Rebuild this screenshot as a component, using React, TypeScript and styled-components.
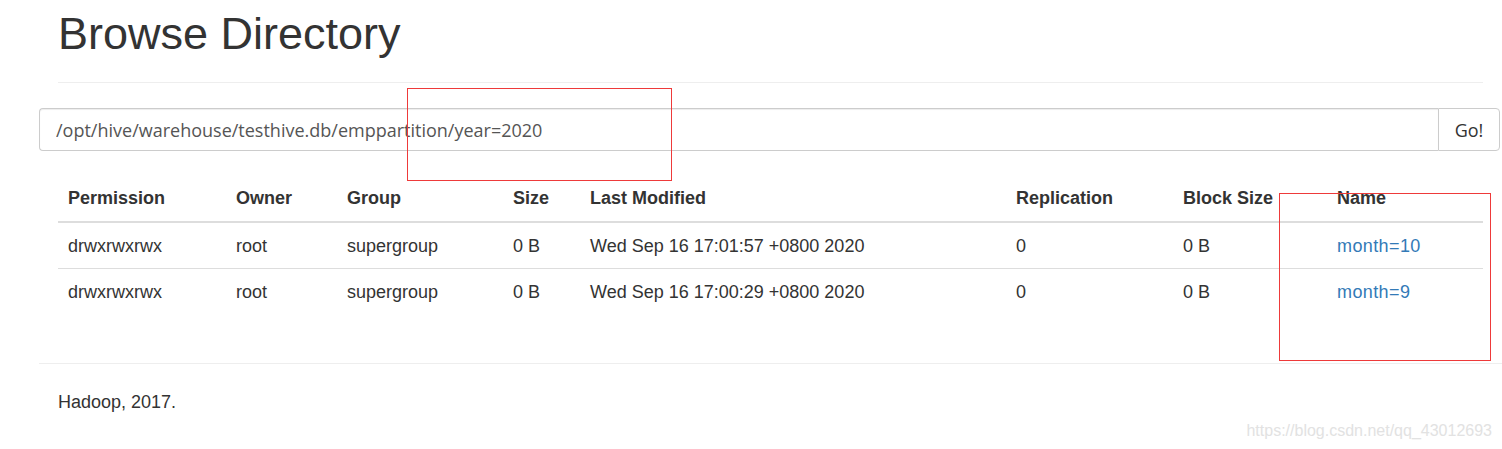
import React from 'react'
import styled, { createGlobalStyle } from 'styled-components'

const GlobalStyle = createGlobalStyle`
  html, body {
    margin: 0;
    padding: 0;
    background: #fff;
  }
  body {
    font-family: "Liberation Sans", Arial, sans-serif;
    font-size: 18px;
    line-height: 1.42857;
    color: #333;
  }
`

const Page = styled.div`
  position: relative;
  width: 1463px;
  height: 449px;
  padding-left: 39px;
  overflow: hidden;
`

const Section = styled.div`
  margin: 0 19px;
`

const Title = styled.h1`
  margin: 9px 0 0;
  font-size: 45px;
  font-weight: 500;
  line-height: 49px;
  color: #333;
`

const Rule = styled.hr<{ $top: number }>`
  margin: ${(p) => p.$top}px 0 0;
  border: 0;
  border-top: 1px solid #eee;
`

const SearchGroup = styled.div`
  display: flex;
  margin: 25px 2px 0 0;
  height: 43px;
`

const PathInput = styled.input`
  flex: 1;
  min-width: 0;
  box-sizing: border-box;
  height: 43px;
  padding: 0 16px;
  font-family: "Open Sans", "Liberation Sans", sans-serif;
  font-size: 18px;
  color: #555;
  border: 1px solid #ccc;
  border-right: 0;
  border-radius: 4px 0 0 4px;
  box-shadow: inset 0 1px 1px rgba(0, 0, 0, 0.075);
  outline: none;
`

const GoButton = styled.button`
  width: 62px;
  height: 43px;
  box-sizing: border-box;
  font-family: "Open Sans", "Liberation Sans", sans-serif;
  font-size: 18px;
  color: #333;
  background: #fff;
  border: 1px solid #ccc;
  border-radius: 0 4px 4px 0;
  padding: 0;
`

const Table = styled.table`
  width: 1425px;
  margin-top: 24px;
  border-collapse: collapse;
  table-layout: fixed;
`

const Th = styled.th<{ $w: number }>`
  width: ${(p) => p.$w}px;
  box-sizing: border-box;
  padding: 11px 10px 9px;
  text-align: left;
  font-weight: bold;
  border-bottom: 2px solid #ddd;
`

const Td = styled.td`
  padding: 11px 10px 9px;
  vertical-align: top;
  white-space: nowrap;
`

const Row = styled.tr<{ $last?: boolean }>`
  border-bottom: ${(p) => (p.$last ? 'none' : '1px solid #ddd')};
`

const NameLink = styled.a`
  color: #337ab7;
  text-decoration: none;
  letter-spacing: 0.4px;
`

const Footer = styled.p`
  margin: 26px 0 0;
`

const Watermark = styled.div`
  position: absolute;
  right: 10px;
  top: 420px;
  font-family: "Liberation Sans", Arial, sans-serif;
  font-size: 16px;
  color: #e2e2e2;
`

const Marker = styled.div<{ $x: number; $y: number; $w: number; $h: number }>`
  position: absolute;
  left: ${(p) => p.$x}px;
  top: ${(p) => p.$y}px;
  width: ${(p) => p.$w}px;
  height: ${(p) => p.$h}px;
  box-sizing: border-box;
  border: 1px solid #ee3a3a;
  pointer-events: none;
`

const columns: [string, number][] = [
  ['Permission', 168],
  ['Owner', 111],
  ['Group', 166],
  ['Size', 77],
  ['Last Modified', 426],
  ['Replication', 167],
  ['Block Size', 154],
  ['Name', 156],
]

const rows = [
  ['drwxrwxrwx', 'root', 'supergroup', '0 B', 'Wed Sep 16 17:01:57 +0800 2020', '0', '0 B', 'month=10'],
  ['drwxrwxrwx', 'root', 'supergroup', '0 B', 'Wed Sep 16 17:00:29 +0800 2020', '0', '0 B', 'month=9'],
]

const App = () => {
  return (
    <>
      <GlobalStyle />
      <Page>
        <Section>
          <Title>Browse Directory</Title>
          <Rule $top={24} />
        </Section>
        <SearchGroup>
          <PathInput defaultValue="/opt/hive/warehouse/testhive.db/emppartition/year=2020" />
          <GoButton>Go!</GoButton>
        </SearchGroup>
        <Section>
          <Table>
            <thead>
              <tr>
                {columns.map(([label, w]) => (
                  <Th key={label} $w={w}>{label}</Th>
                ))}
              </tr>
            </thead>
            <tbody>
              {rows.map((r, i) => (
                <Row key={i} $last={i === rows.length - 1}>
                  {r.map((cell, j) => (
                    <Td key={j}>
                      {j === r.length - 1 ? <NameLink href="#">{cell}</NameLink> : cell}
                    </Td>
                  ))}
                </Row>
              ))}
            </tbody>
          </Table>
        </Section>
        <Rule $top={48} />
        <Section>
          <Footer>Hadoop, 2017.</Footer>
        </Section>
        <Watermark>https://blog.csdn.net/qq_43012693</Watermark>
        <Marker $x={407} $y={88} $w={265} $h={93} />
        <Marker $x={1279} $y={193} $w={212} $h={168} />
      </Page>
    </>
  )
}

export default App
